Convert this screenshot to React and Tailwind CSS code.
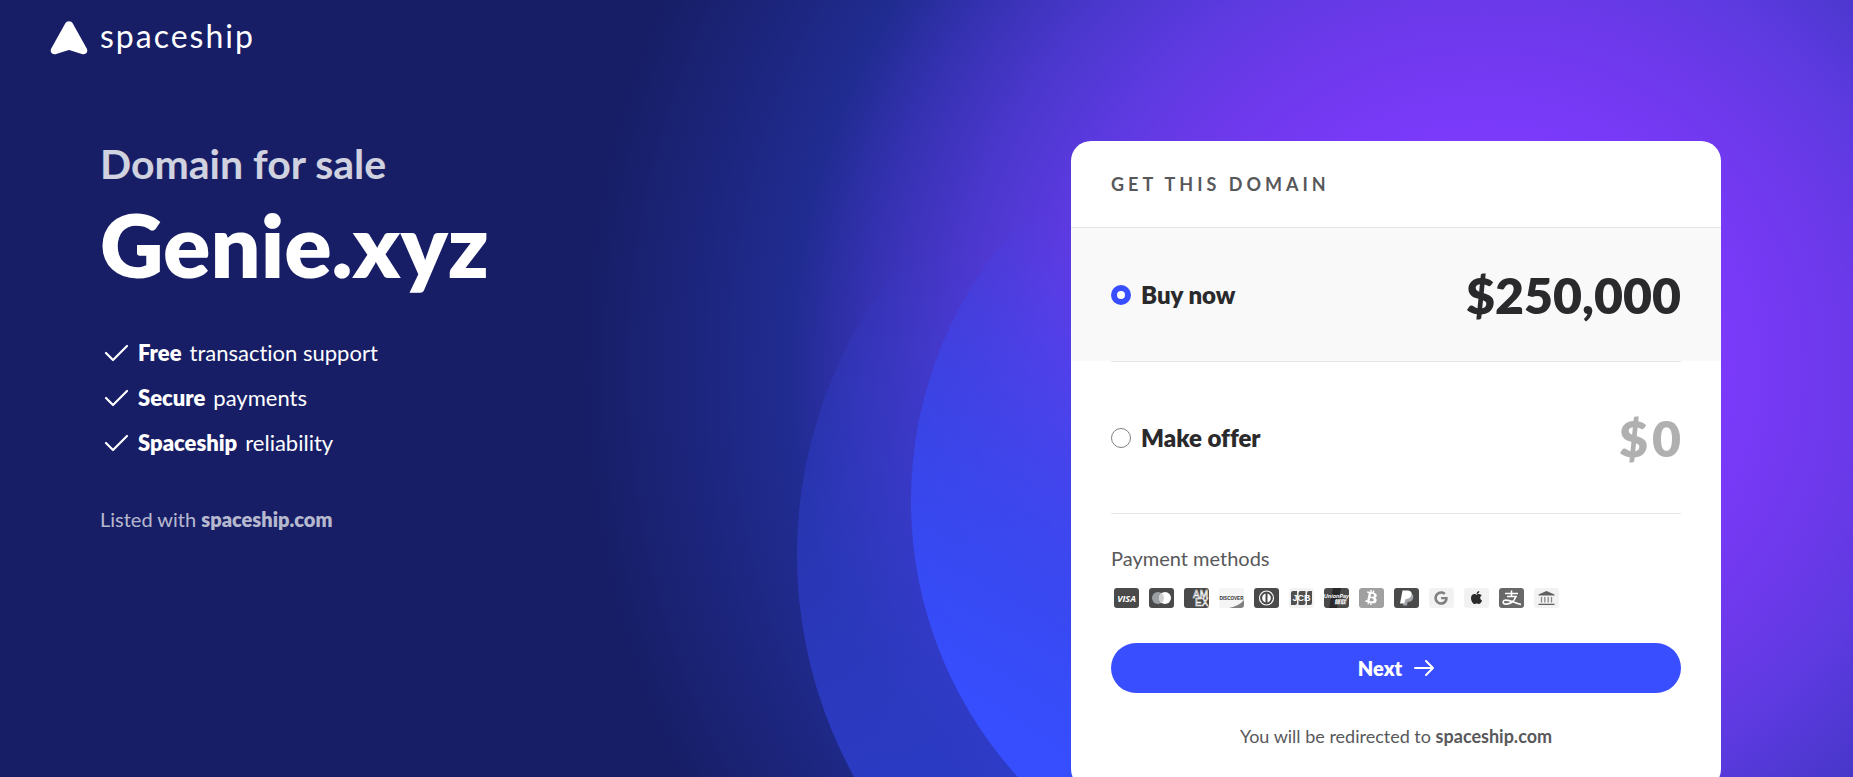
import React, { useState } from 'react';
import { FaBtc, FaApple, FaGoogle } from 'react-icons/fa';

const benefits = [
    { strong: 'Free', text: 'transaction support' },
    { strong: 'Secure', text: 'payments' },
    { strong: 'Spaceship', text: 'reliability' },
];

const Logo = () => (
    <a href="#" aria-label="spaceship" className="flex items-center gap-3 text-white">
        <svg width="38" height="34" viewBox="0 0 38 34" fill="currentColor" aria-hidden="true">
            <path d="M15.2 2.4C16.8-.4 21.2-.4 22.8 2.4L36.6 27.2C38.8 31.2 35.6 34.2 31.8 33.1L20 29.2Q19 28.9 18 29.2L6.2 33.1C2.4 34.2-.8 31.2 1.4 27.2Z" />
        </svg>
        <span className="pb-1 text-[32px] leading-9 font-normal tracking-[2px]">spaceship</span>
    </a>
);

const Check = () => (
    <svg width="24" height="24" viewBox="0 0 24 24" fill="none" stroke="white" strokeWidth="2.2" strokeLinecap="round" strokeLinejoin="round" aria-hidden="true">
        <path d="M2 12l7 7L23 5" />
    </svg>
);

const Pay = ({ name, fill, children }) => (
    <svg width="25" height="20" viewBox="0 0 25 20" role="img" aria-label={name}>
        <rect width="25" height="20" rx="3" fill={fill} />
        {children}
    </svg>
);

const PaymentMethods = () => (
    <div className="flex flex-wrap gap-[10px] px-[3px]">
        <Pay name="Visa" fill="#4a4a4a">
            <text x="12.5" y="13.5" textAnchor="middle" fontSize="9" fontWeight="700" fontStyle="italic" fontFamily="Open Sans" fill="#fff">VISA</text>
        </Pay>
        <Pay name="Mastercard" fill="#4a4a4a">
            <circle cx="9" cy="10" r="6" fill="#9c9fa3" />
            <circle cx="16" cy="10" r="6" fill="#fff" />
            <path d="M12.5 5.1a6 6 0 0 1 0 9.8a6 6 0 0 1 0-9.8z" fill="#cfd0d2" />
        </Pay>
        <Pay name="American Express" fill="#4a4a4a">
            <text x="9" y="9.5" fontSize="10" fontFamily="Liberation Sans" fill="#4a4a4a" stroke="#fff" strokeWidth="0.6">AM</text>
            <text x="11" y="17.5" fontSize="10" fontFamily="Liberation Sans" fill="#4a4a4a" stroke="#fff" strokeWidth="0.6">EX</text>
        </Pay>
        <Pay name="Discover" fill="#f5f5f5">
            <path d="M10 20Q20 18 25 12V17Q25 20 22 20Z" fill="#808080" />
            <text x="12.5" y="12" textAnchor="middle" fontSize="4.6" fontWeight="700" fontFamily="Liberation Sans" fill="#333">DISCOVER</text>
        </Pay>
        <Pay name="Diners Club" fill="#4a4a4a">
            <circle cx="12.5" cy="10" r="7" fill="none" stroke="#fff" strokeWidth="1.2" />
            <path d="M11.5 5.5a4.7 4.7 0 0 0 0 9zM13.5 5.5a4.7 4.7 0 0 1 0 9z" fill="#fff" />
        </Pay>
        <Pay name="JCB" fill="#f2f2f2">
            <path d="M4 3h4v12a2 2 0 0 1-2 2H2V5a2 2 0 0 1 2-2zM11.5 3h5v12a2 2 0 0 1-2 2h-5V5a2 2 0 0 1 2-2zM20 3h3v12a2 2 0 0 1-2 2h-3V5a2 2 0 0 1 2-2z" fill="#505050" />
            <text x="12.5" y="13" textAnchor="middle" fontSize="9" fontWeight="700" fontFamily="Liberation Sans" fill="#fff">JCB</text>
        </Pay>
        <Pay name="UnionPay" fill="#4a4a4a">
            <path d="M9 0h8l-4 20H5z" fill="#292929" />
            <text x="12.5" y="9.5" textAnchor="middle" fontSize="5.5" fontWeight="700" fontStyle="italic" fontFamily="Liberation Sans" fill="#fff">UnionPay</text>
            <text x="16" y="16" textAnchor="middle" fontSize="6" fontWeight="700" fontStyle="italic" fontFamily="Noto Sans CJK SC" fill="#fff">银联</text>
        </Pay>
        <Pay name="Bitcoin" fill="#a0a0a0">
            <g transform="rotate(12 12.5 10)">
                <FaBtc x="5" y="2" size={15} color="#fff" />
            </g>
        </Pay>
        <Pay name="PayPal" fill="#4a4a4a">
            <path d="M12 5.5h5.5q2.5 1.5 1.5 5t-5.5 3.5l-.5 3.5H9z" fill="#a3a7ab" />
            <path d="M8.5 2.5h5.5q4.5 .5 3.5 4.5t-6 4.2L10.2 15.5H6z" fill="#fff" />
        </Pay>
        <Pay name="Google Pay" fill="#f2f2f2">
            <FaGoogle x="5" y="3" size={14} color="#808080" />
        </Pay>
        <Pay name="Apple Pay" fill="#f2f2f2">
            <FaApple x="5" y="2" size={15} color="#2b2b2b" />
        </Pay>
        <Pay name="Alipay" fill="#686868">
            <path d="M6 5.5h13M12.5 2.5v6M8 8.5h9q-1.5 4-4.5 6t-7 1.5q-2.5-1.5-.5-3.5c4-2 9 2 17 4" fill="none" stroke="#fff" strokeWidth="1.6" />
        </Pay>
        <Pay name="Bank transfer" fill="#f2f2f2">
            <path d="M4.5 7.5v-1L12.5 3l8 3.5v1zM4.5 15.7h16V17h-16z" fill="#606060" />
            <path d="M7.5 9v5.5M10.8 9v5.5M14.2 9v5.5M17.5 9v5.5" stroke="#8a8a8a" strokeWidth="1.3" />
        </Pay>
    </div>
);

// big glow behind the card plus two overlapping discs
const Backdrop = () => (
    <svg className="absolute inset-0 h-full w-full" viewBox="0 0 1853 777" preserveAspectRatio="xMidYMin slice" aria-hidden="true">
        <defs>
            <radialGradient id="glow" gradientUnits="userSpaceOnUse" cx="1485" cy="370" r="905">
                <stop offset="0.22" stopColor="#803aff" />
                <stop offset="0.4" stopColor="#6c39ea" />
                <stop offset="0.49" stopColor="#5c3ae0" />
                <stop offset="0.59" stopColor="#4a37cc" />
                <stop offset="0.69" stopColor="#3431b0" />
                <stop offset="0.765" stopColor="#212c92" />
                <stop offset="0.88" stopColor="#1c257c" />
                <stop offset="1" stopColor="#171e66" />
            </radialGradient>
            <linearGradient id="outer" gradientUnits="userSpaceOnUse" x1="920" y1="777" x2="1020" y2="260">
                <stop offset="0" stopColor="#2c3cc8" stopOpacity="0.9" />
                <stop offset="1" stopColor="#3344dd" stopOpacity="0" />
            </linearGradient>
            <linearGradient id="inner" gradientUnits="userSpaceOnUse" x1="960" y1="700" x2="1210" y2="320">
                <stop offset="0" stopColor="#374eff" />
                <stop offset="1" stopColor="#374eff" stopOpacity="0" />
            </linearGradient>
        </defs>
        <rect width="1853" height="777" fill="url(#glow)" />
        <circle cx="1257" cy="555" r="460" fill="url(#outer)" />
        <circle cx="1321" cy="501" r="410" fill="url(#inner)" />
    </svg>
);

const radioClass =
    'h-5 w-5 shrink-0 appearance-none rounded-full border border-[#808080] bg-white checked:border-[6px] checked:border-[#394eff]';

const App = () => {
    const [option, setOption] = useState('buy');
    const [offer, setOffer] = useState('');

    return (
        <div className="relative h-screen overflow-hidden bg-[#171e66] font-[Lato,sans-serif] [font-variant-ligatures:none]">
            <Backdrop />
            <div className="relative">
                <header className="flex h-[75px] items-center px-[50px]">
                    <Logo />
                </header>

                <main className="flex items-start justify-between pt-[66px] pr-[132px] pl-[100px]">
                    <section className="text-white">
                        <h2 className="text-[41px] leading-[46px] font-bold text-white/80">Domain for sale</h2>
                        <h1 className="mt-2 text-[88px] leading-[98px] font-extrabold">Genie.xyz</h1>
                        <ul className="mt-[45px] space-y-[15px]">
                            {benefits.map((item) => (
                                <li key={item.strong} className="flex h-[30px] items-center gap-2 text-[22px] leading-[30px]">
                                    <span className="mr-[2px] ml-1"><Check /></span>
                                    <strong className="font-extrabold">{item.strong}</strong>
                                    <span>{item.text}</span>
                                </li>
                            ))}
                        </ul>
                        <p className="mt-[46px] text-[20px] leading-[30px] text-white/70">
                            Listed with <strong className="font-extrabold">spaceship.com</strong>
                        </p>
                    </section>

                    <form className="w-[650px] overflow-hidden rounded-[20px] bg-white text-[#2a2a2c]" onSubmit={(e) => e.preventDefault()}>
                        <h3 className="border-b border-[#e6e6e6] px-10 py-[31px] text-[18px] leading-6 font-bold tracking-[4px] text-[#58585b]">
                            GET THIS DOMAIN
                        </h3>
                        <div className="flex h-[133px] items-center justify-between bg-[#f9f9f9] px-10">
                            <label className="flex items-center gap-[10px] text-[24px] leading-8 font-extrabold">
                                <input type="radio" name="option" className={radioClass} checked={option === 'buy'} onChange={() => setOption('buy')} />
                                Buy now
                            </label>
                            <span className="text-[50px] leading-[60px] font-extrabold">$250,000</span>
                        </div>
                        <div className="px-10">
                            <div className="flex h-[153px] items-center justify-between border-y border-[#e6e6e6]">
                                <label className="flex items-center gap-[10px] text-[24px] leading-8 font-extrabold">
                                    <input type="radio" name="option" className={radioClass} checked={option === 'offer'} onChange={() => setOption('offer')} />
                                    Make offer
                                </label>
                                <label className="flex items-center gap-1 text-[50px] leading-[60px] font-extrabold text-[#b0b0b0]">
                                    $
                                    <input
                                        type="text"
                                        aria-label="Offer amount"
                                        placeholder="0"
                                        value={offer}
                                        onChange={(e) => setOffer(e.target.value)}
                                        className="field-sizing-content bg-transparent text-right outline-none placeholder:text-[#b0b0b0]"
                                    />
                                </label>
                            </div>
                            <p className="mt-[29px] mb-[15px] text-[20px] leading-[30px] text-[#58585b]">Payment methods</p>
                            <PaymentMethods />
                            <button type="submit" className="mt-[35px] flex h-[50px] w-full items-center justify-center gap-3 rounded-full bg-[#394eff] text-[20px] font-extrabold text-white">
                                Next
                                <svg width="20" height="18" viewBox="0 0 20 18" fill="none" stroke="white" strokeWidth="2" strokeLinecap="round" strokeLinejoin="round" aria-hidden="true">
                                    <path d="M1 9h18M12 2l7 7-7 7" />
                                </svg>
                            </button>
                            <p className="mt-[30px] pb-10 text-center text-[18px] leading-[26px] text-[#58585b]">
                                You will be redirected to <strong>spaceship.com</strong>
                            </p>
                        </div>
                    </form>
                </main>
            </div>
        </div>
    );
};

export default App;
